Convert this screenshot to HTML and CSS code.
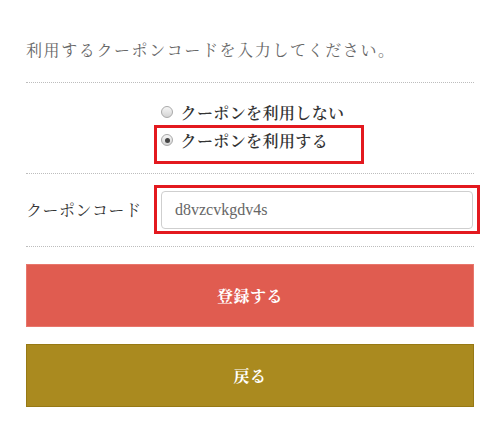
FILE: index.html
```html
<!DOCTYPE html>
<html lang="ja">
<head>
<meta charset="utf-8">
<link rel="stylesheet" href="styles.css">
</head>
<body>
<div class="page">
  <p class="intro">利用するクーポンコードを入力してください。</p>
  <div class="choices">
    <div class="choice-list">
      <label class="choice"><span class="radio"></span>クーポンを利用しない</label>
      <label class="choice marked"><span class="radio checked"></span>クーポンを利用する</label>
    </div>
  </div>
  <div class="code-row">
    <span class="code-label">クーポンコード</span>
    <div class="field marked-field">
      <div class="input">d8vzcvkgdv4s</div>
    </div>
  </div>
  <div class="actions">
    <button class="btn btn-submit">登録する</button>
    <button class="btn btn-back">戻る</button>
  </div>
</div>
</body>
</html>
```
FILE: styles.css
```css
* { box-sizing: border-box; }
html, body { margin: 0; padding: 0; background: #fff; }
body {
  font-family: "Noto Serif CJK JP", "Liberation Serif", "Noto Sans CJK JP", serif;
  color: #333;
}
.page { padding: 0 26px; }
.intro {
  margin: 0;
  padding-top: 38px;
  padding-bottom: 20px;
  line-height: 24px;
  font-size: 16px;
  letter-spacing: 1.6px;
  color: #666;
  font-weight: 400;
  border-bottom: 1px dotted #bdbdbd;
}
.choices {
  display: flex;
  justify-content: center;
  padding: 15px 0 19px;
  border-bottom: 1px dotted #bdbdbd;
}
.choice-list { display: flex; flex-direction: column; padding-left: 6px; }
.choice {
  position: relative;
  display: flex;
  align-items: center;
  height: 28px;
  font-size: 16px;
  font-weight: 600;
  letter-spacing: 0.4px;
  color: #333;
}
.radio {
  width: 12px;
  height: 12px;
  border-radius: 50%;
  border: 1px solid #a9a9a9;
  background: linear-gradient(#f6f6f6, #d4d4d4);
  margin-right: 7px;
  display: flex;
  align-items: center;
  justify-content: center;
}
.radio.checked::before {
  content: "";
  width: 5px;
  height: 5px;
  border-radius: 50%;
  background: #444;
}
.marked::after {
  content: "";
  position: absolute;
  left: -7px;
  top: -1px;
  width: 204px;
  height: 33px;
  border: 3px solid #e3191f;
}
.code-row {
  display: flex;
  align-items: flex-start;
  padding: 17px 0 17px;
  border-bottom: 1px dotted #bdbdbd;
}
.code-label {
  width: 135px;
  flex: none;
  margin-top: 6px;
  line-height: 26px;
  font-size: 16px;
  letter-spacing: 0.5px;
  color: #333;
}
.field { position: relative; flex: 1; margin-right: 1px; }
.input {
  height: 38px;
  border: 1px solid #cfcfcf;
  border-radius: 4px;
  padding: 0 13px;
  font-family: "Liberation Serif", serif;
  font-size: 16px;
  line-height: 36px;
  color: #666;
  background: #fff;
}
.marked-field::after {
  content: "";
  position: absolute;
  left: -7px;
  top: -6px;
  right: -7px;
  bottom: -5px;
  border: 3px solid #e3191f;
}
.actions {
  display: flex;
  flex-direction: column;
  gap: 17px;
  padding-top: 17px;
}
.btn {
  display: block;
  width: 100%;
  height: 63px;
  border: 1px solid;
  font-family: inherit;
  font-size: 16px;
  font-weight: 700;
  color: #fff;
  letter-spacing: 0.5px;
  padding: 0;
}
.btn-submit { background: #e05c50; border-color: #e8766c; }
.btn-back { background: #aa8a1f; border-color: #977914; }
```
